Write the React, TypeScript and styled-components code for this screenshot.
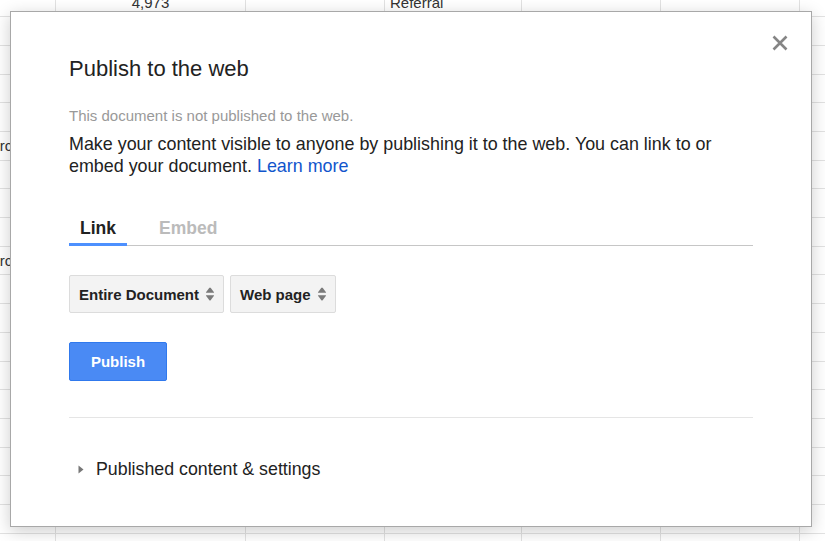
import React from "react";
import styled, { createGlobalStyle } from "styled-components";

const GlobalStyle = createGlobalStyle`
  html, body {
    margin: 0;
    padding: 0;
    background: #fff;
  }
  body {
    font-family: "Liberation Sans", Arial, sans-serif;
    color: #222;
  }
`;

const Page = styled.div`
  position: relative;
  width: 825px;
  height: 541px;
  overflow: hidden;
  background: #fff;
`;

const Sheet = styled.div`
  display: grid;
  grid-template-columns: 136px 190px 139px 137px 139px 139px 100px;
  grid-auto-rows: 28.7px;
  margin-left: -80px;
  margin-top: -11.4px;
  width: 980px;
`;

const Cell = styled.div<{ $align?: "left" | "center"; $indent?: number }>`
  border-right: 1px solid #e2e2e2;
  border-bottom: 1px solid #e2e2e2;
  font-size: 15px;
  color: #333;
  display: flex;
  align-items: center;
  justify-content: ${(p) => (p.$align === "center" ? "center" : "flex-start")};
  padding-left: ${(p) => p.$indent ?? 5}px;
  white-space: nowrap;
  overflow: hidden;
  box-sizing: border-box;
`;

const Dialog = styled.div`
  position: absolute;
  left: 10px;
  top: 11px;
  width: 802px;
  height: 516px;
  box-sizing: border-box;
  background: #fff;
  border: 1px solid #a8a8a8;
  box-shadow: 0 4px 16px rgba(0, 0, 0, 0.2);
  padding: 44px 58px 0 58px;
  display: flex;
  flex-direction: column;
`;

const Close = styled.button`
  position: absolute;
  top: 22px;
  right: 22px;
  width: 18px;
  height: 18px;
  padding: 0;
  border: 0;
  background: none;
  cursor: pointer;
  display: flex;
`;

const Title = styled.h1`
  margin: 0;
  font-size: 22px;
  line-height: 26px;
  font-weight: normal;
  color: #222;
`;

const Status = styled.p`
  margin: 25px 0 0;
  font-size: 15px;
  line-height: 18px;
  color: #999;
`;

const Body = styled.p`
  margin: 9px 0 0;
  font-size: 17.9px;
  line-height: 21.5px;
  color: #222;
`;

const LearnMore = styled.a`
  color: #15c;
  text-decoration: none;
`;

const TabBar = styled.div`
  display: flex;
  gap: 21px;
  margin-top: 41px;
  border-bottom: 1px solid #c6c6c6;
`;

const Tab = styled.div<{ $active?: boolean }>`
  padding: 0 11px 4px;
  font-size: 17.5px;
  line-height: 21px;
  font-weight: bold;
  color: ${(p) => (p.$active ? "#222" : "#bbb")};
  border-bottom: 3px solid ${(p) => (p.$active ? "#4d90fe" : "transparent")};
  margin-bottom: -1px;
`;

const SelectRow = styled.div`
  display: flex;
  gap: 6px;
  margin-top: 29px;
`;

const Select = styled.div`
  display: flex;
  align-items: center;
  gap: 6px;
  height: 38px;
  box-sizing: border-box;
  padding: 0 8px 0 9px;
  background: #f3f3f3;
  border: 1px solid #dcdcdc;
  border-radius: 2px;
  font-size: 15px;
  font-weight: bold;
  color: #222;
`;

const PublishButton = styled.button`
  align-self: flex-start;
  margin-top: 29px;
  width: 98px;
  height: 39px;
  background: #4a8af4;
  border: 1px solid #3079ed;
  border-radius: 2px;
  color: #fff;
  font-family: inherit;
  font-size: 15px;
  font-weight: bold;
  cursor: pointer;
`;

const Divider = styled.hr`
  margin: 36px 0 0;
  border: 0;
  border-top: 1px solid #e5e5e5;
`;

const Disclosure = styled.div`
  display: flex;
  align-items: center;
  gap: 12px;
  margin-top: 41px;
  padding-left: 9px;
  font-size: 17.8px;
  line-height: 21px;
  color: #222;
`;

const UpDown = () => (
  <svg width="10" height="16" viewBox="0 0 10 16">
    <path d="M5 1.5 Q5.4 1.5 5.8 2 L9 6.2 Q9.3 6.8 8.6 6.8 L1.4 6.8 Q0.7 6.8 1 6.2 L4.2 2 Q4.6 1.5 5 1.5 Z" fill="#7a7a7a" />
    <path d="M5 14.5 Q5.4 14.5 5.8 14 L9 9.8 Q9.3 9.2 8.6 9.2 L1.4 9.2 Q0.7 9.2 1 9.8 L4.2 14 Q4.6 14.5 5 14.5 Z" fill="#7a7a7a" />
  </svg>
);

const rows: { cells: [string, string, string] }[] = Array.from({ length: 20 }, (_, i) => ({
  cells: [
    i === 5 || i === 9 ? "Search" : "",
    i === 0 ? "4,973" : "",
    i === 0 ? "Referral" : "",
  ],
}));

export default function App() {
  return (
    <Page>
      <GlobalStyle />
      <Sheet>
        {rows.map((r, i) => (
          <React.Fragment key={i}>
            <Cell $indent={53}>{r.cells[0]}</Cell>
            <Cell $align="center" $indent={0}>{r.cells[1]}</Cell>
            <Cell />
            <Cell>{r.cells[2]}</Cell>
            <Cell />
            <Cell />
            <Cell />
          </React.Fragment>
        ))}
      </Sheet>

      <Dialog>
        <Close aria-label="Close">
          <svg width="18" height="18" viewBox="0 0 18 18">
            <path d="M2.5 2.5 L15.5 15.5 M15.5 2.5 L2.5 15.5" stroke="#858585" strokeWidth="2.6" />
          </svg>
        </Close>
        <Title>Publish to the web</Title>
        <Status>This document is not published to the web.</Status>
        <Body>
          Make your content visible to anyone by publishing it to the web. You can link to or
          embed your document. <LearnMore href="#">Learn more</LearnMore>
        </Body>

        <TabBar>
          <Tab $active>Link</Tab>
          <Tab>Embed</Tab>
        </TabBar>

        <SelectRow>
          <Select>
            Entire Document <UpDown />
          </Select>
          <Select>
            Web page <UpDown />
          </Select>
        </SelectRow>

        <PublishButton>Publish</PublishButton>

        <Divider />

        <Disclosure>
          <svg width="6" height="9" viewBox="0 0 6 9">
            <path d="M0.5 0.5 L5.5 4.5 L0.5 8.5 Z" fill="#777" />
          </svg>
          Published content &amp; settings
        </Disclosure>
      </Dialog>
    </Page>
  );
}
